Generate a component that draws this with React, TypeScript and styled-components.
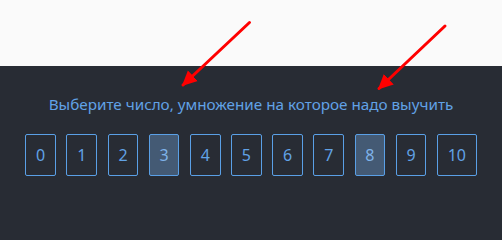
import React from 'react';
import styled, { createGlobalStyle } from 'styled-components';

const GlobalStyle = createGlobalStyle`
  html, body {
    margin: 0;
    padding: 0;
    background: #282c34;
  }
  body {
    font-family: 'Noto Sans', 'Open Sans', sans-serif;
  }
`;

const numbers = [0, 1, 2, 3, 4, 5, 6, 7, 8, 9, 10];
const selected = [3, 8];

const App: React.FC = () => {
  return (
    <Page>
      <GlobalStyle />
      <TopBar />
      <Main>
        <Title>Выберите число, умножение на которое надо выучить</Title>
        <NumberRow>
          {numbers.map(n => (
            <NumberButton key={n} $active={selected.includes(n)}>
              {n}
            </NumberButton>
          ))}
        </NumberRow>
      </Main>
      <Arrows width="502" height="201" viewBox="0 0 502 201">
        <defs>
          <marker id="head" markerWidth="6" markerHeight="6" refX="4.5" refY="3" orient="auto" markerUnits="strokeWidth">
            <path d="M0,0.6 L5,3 L0,5.4 Z" fill="#ff0000" />
          </marker>
        </defs>
        <line x1="249.5" y1="22.5" x2="183" y2="85" stroke="#ff0000" strokeWidth="3" strokeLinecap="round" markerEnd="url(#head)" />
        <line x1="445" y1="26" x2="379" y2="88.5" stroke="#ff0000" strokeWidth="3" strokeLinecap="round" markerEnd="url(#head)" />
      </Arrows>
    </Page>
  );
};

export default App;

const Page = styled.div`
  position: relative;
  width: 502px;
  height: 201px;
  overflow: hidden;
`;

const TopBar = styled.div`
  height: 66px;
  background: #fafafa;
`;

const Main = styled.div`
  height: 135px;
  background: #282c34;
  display: flex;
  flex-direction: column;
  align-items: center;
  padding-top: 27px;
  box-sizing: border-box;
`;

const Title = styled.p`
  margin: 0;
  font-size: 15.25px;
  line-height: 22px;
  color: #61a2e6;
`;

const NumberRow = styled.div`
  display: flex;
  gap: 10.5px;
  margin-top: 19px;
`;

const NumberButton = styled.div<{ $active: boolean }>`
  height: 42px;
  padding: 0 9.75px;
  box-sizing: border-box;
  display: flex;
  align-items: center;
  justify-content: center;
  border: 1px solid #5aa0e6;
  border-radius: 2px;
  background: ${p => (p.$active ? '#445a74' : 'transparent')};
  color: ${p => (p.$active ? '#7fb3ea' : '#61a2e6')};
  font-size: 16px;
  cursor: pointer;
`;

const Arrows = styled.svg`
  position: absolute;
  left: 0;
  top: 0;
  pointer-events: none;
`;
